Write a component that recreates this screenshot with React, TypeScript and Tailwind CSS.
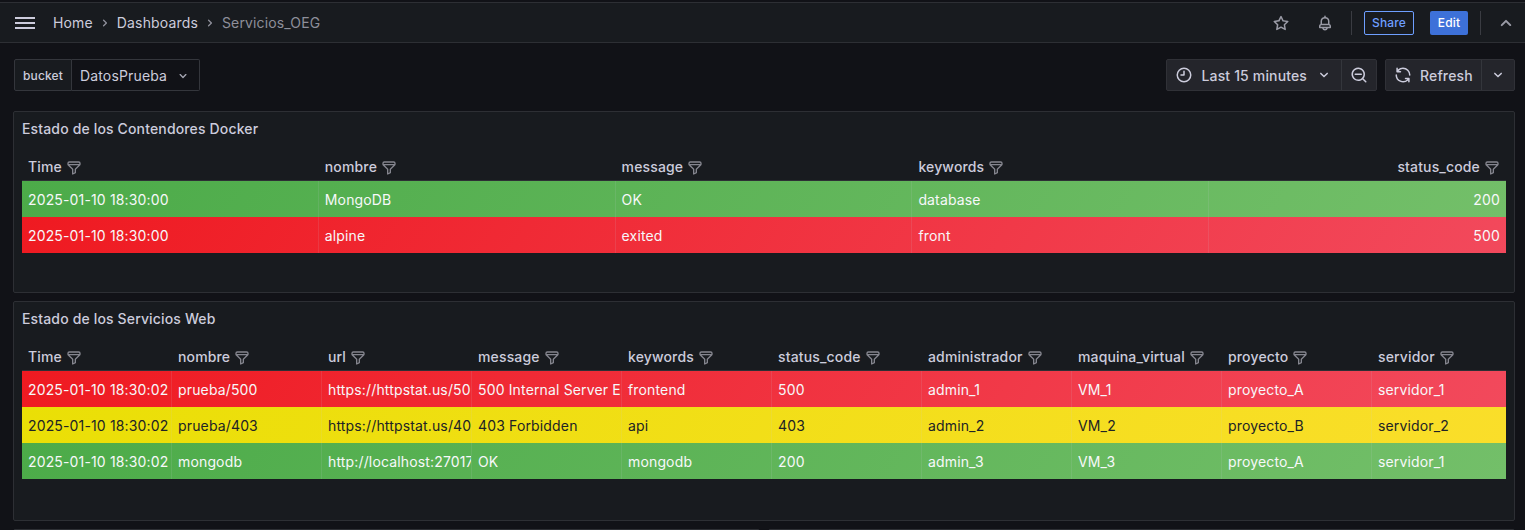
import type { ReactNode } from "react";

const ICONS = {
  filter:
    "M19,2H5A3,3,0,0,0,2,5V6.17a3,3,0,0,0,.25,1.2l0,.06a2.81,2.81,0,0,0,.59.86L9,14.41V21a1,1,0,0,0,.47.85A1,1,0,0,0,10,22a1,1,0,0,0,.45-.11l4-2A1,1,0,0,0,15,19V14.41l6.12-6.12a2.81,2.81,0,0,0,.59-.86l0-.06A3,3,0,0,0,22,6.17V5A3,3,0,0,0,19,2ZM13.29,13.29A1,1,0,0,0,13,14v4.38l-2,1V14a1,1,0,0,0-.29-.71L5.41,8H18.59ZM20,6H4V5A1,1,0,0,1,5,4H19a1,1,0,0,1,1,1Z",
  down: "M17,9.17a1,1,0,0,0-1.41,0L12,12.71,8.46,9.17a1,1,0,0,0-1.41,0,1,1,0,0,0,0,1.42l4.24,4.24a1,1,0,0,0,1.42,0L17,10.59A1,1,0,0,0,17,9.17Z",
  right:
    "M14.83,11.29,10.59,7.05a1,1,0,0,0-1.42,0,1,1,0,0,0,0,1.41L12.71,12,9.17,15.54a1,1,0,0,0,0,1.41,1,1,0,0,0,.71.29,1,1,0,0,0,.71-.29l4.24-4.24A1,1,0,0,0,14.83,11.29Z",
  up: "M17,13.41,12.71,9.17a1,1,0,0,0-1.42,0L7.05,13.41a1,1,0,0,0,0,1.42,1,1,0,0,0,1.41,0L12,11.29l3.54,3.54a1,1,0,0,0,.7.29,1,1,0,0,0,.71-.29A1,1,0,0,0,17,13.41Z",
  clock:
    "M12,6a1,1,0,0,0-1,1v4H8a1,1,0,0,0,0,2h4a1,1,0,0,0,1-1V7A1,1,0,0,0,12,6Zm0-4A10,10,0,1,0,22,12,10,10,0,0,0,12,2Zm0,18a8,8,0,1,1,8-8A8,8,0,0,1,12,20Z",
  zoomOut:
    "M21.71,20.29,18,16.61A9,9,0,1,0,16.61,18l3.68,3.68a1,1,0,0,0,1.42,0A1,1,0,0,0,21.71,20.29ZM11,18a7,7,0,1,1,7-7A7,7,0,0,1,11,18Zm4-8H7a1,1,0,0,0,0,2h8a1,1,0,0,0,0-2Z",
  sync: "M19.91,15.51H15.38a1,1,0,0,0,0,2h2.4A8,8,0,0,1,4,12a1,1,0,1,0-2,0,10,10,0,0,0,16.88,7.23V21a1,1,0,0,0,2,0V16.5A1,1,0,0,0,19.91,15.51ZM12,2A10,10,0,0,0,5.12,4.77V3a1,1,0,0,0-2,0V7.5a1,1,0,0,0,1,1h4.5a1,1,0,0,0,0-2H6.22A8,8,0,0,1,20,12a1,1,0,0,0,2,0A10,10,0,0,0,12,2Z",
  bell: "M18,13.18V10a6,6,0,0,0-5-5.91V3a1,1,0,0,0-2,0V4.09A6,6,0,0,0,6,10v3.18A3,3,0,0,0,4,16v2a1,1,0,0,0,1,1H8.14a4,4,0,0,0,7.72,0H19a1,1,0,0,0,1-1V16A3,3,0,0,0,18,13.18ZM8,10a4,4,0,0,1,8,0v3H8Zm4,10a2,2,0,0,1-1.72-1h3.44A2,2,0,0,1,12,20Zm6-3H6V16a1,1,0,0,1,1-1H17a1,1,0,0,1,1,1Z",
  star: "M22,9.67A1,1,0,0,0,21.14,9l-5.69-.83L12.9,3a1,1,0,0,0-1.8,0L8.55,8.16,2.86,9a1,1,0,0,0-.81.68,1,1,0,0,0,.25,1l4.13,4-1,5.68A1,1,0,0,0,6.9,21.44L12,18.77l5.1,2.67a.93.93,0,0,0,.46.12,1,1,0,0,0,.59-.19,1,1,0,0,0,.4-1l-1-5.68,4.13-4A1,1,0,0,0,22,9.67Zm-6.15,4a1,1,0,0,0-.29.88l.72,4.2-3.76-2a1.06,1.06,0,0,0-.94,0l-3.76,2,.72-4.2a1,1,0,0,0-.29-.88l-3-3,4.21-.61a1,1,0,0,0,.76-.55L12,5.7l1.88,3.82a1,1,0,0,0,.76.55l4.21.61Z",
};

function Icon({ name, className = "size-4" }: { name: keyof typeof ICONS; className?: string }) {
  return (
    <svg viewBox="0 0 24 24" fill="currentColor" className={`shrink-0 ${className}`}>
      <path d={ICONS[name]} />
    </svg>
  );
}

type Tone = "green" | "red" | "yellow";
type Row = { tone: Tone; cells: string[] };

const TONES: Record<Tone, string> = {
  green: "bg-[linear-gradient(120deg,#4cab49,#73bf69)] text-[#f7f8fa]",
  red: "bg-[linear-gradient(120deg,#ef1a21,#f2495c)] text-[#f7f8fa]",
  yellow: "bg-[linear-gradient(120deg,#eadf06,#fade2a)] text-[#202226]",
};

function Panel({ title, className, children }: { title: string; className: string; children: ReactNode }) {
  return (
    <section className={`flex shrink-0 flex-col rounded-[2px] border border-[#2d2f34] bg-[#181b1f] px-2 ${className}`}>
      <h2 className="flex h-[33px] shrink-0 items-center font-medium">{title}</h2>
      {children}
    </section>
  );
}

function Table({
  columns,
  rows,
  cell,
  lastRight = false,
}: {
  columns: string[];
  rows: Row[];
  cell: string;
  lastRight?: boolean;
}) {
  const align = (i: number) => (lastRight && i === columns.length - 1 ? "justify-end" : "");
  return (
    <div className="mt-2 overflow-hidden">
      <div className="flex h-7 border-b border-[#2d2f34]">
        {columns.map((name, i) => (
          <div key={name} className={`flex shrink-0 items-center gap-1 px-1.5 font-medium ${cell} ${align(i)}`}>
            {name}
            <Icon name="filter" className="mt-0.5 size-4 text-[#85868f]" />
          </div>
        ))}
      </div>
      {rows.map((row, r) => (
        <div key={r} className={`flex h-9 ${TONES[row.tone]}`}>
          {row.cells.map((text, i) => (
            <div
              key={i}
              className={`flex shrink-0 items-center overflow-hidden border-r border-[#ccccdc]/12 pt-0.5 pl-1.5 last:border-r-0 last:pr-1.5 ${cell} ${align(i)}`}
            >
              <span className="whitespace-nowrap">{text}</span>
            </div>
          ))}
        </div>
      ))}
    </div>
  );
}

const DOCKER_COLUMNS = ["Time", "nombre", "message", "keywords", "status_code"];
const DOCKER_ROWS: Row[] = [
  { tone: "green", cells: ["2025-01-10 18:30:00", "MongoDB", "OK", "database", "200"] },
  { tone: "red", cells: ["2025-01-10 18:30:00", "alpine", "exited", "front", "500"] },
];

const WEB_COLUMNS = [
  "Time",
  "nombre",
  "url",
  "message",
  "keywords",
  "status_code",
  "administrador",
  "maquina_virtual",
  "proyecto",
  "servidor",
];
const WEB_ROWS: Row[] = [
  {
    tone: "red",
    cells: ["2025-01-10 18:30:02", "prueba/500", "https://httpstat.us/50", "500 Internal Server E", "frontend", "500", "admin_1", "VM_1", "proyecto_A", "servidor_1"],
  },
  {
    tone: "yellow",
    cells: ["2025-01-10 18:30:02", "prueba/403", "https://httpstat.us/40", "403 Forbidden", "api", "403", "admin_2", "VM_2", "proyecto_B", "servidor_2"],
  },
  {
    tone: "green",
    cells: ["2025-01-10 18:30:02", "mongodb", "http://localhost:27017", "OK", "mongodb", "200", "admin_3", "VM_3", "proyecto_A", "servidor_1"],
  },
];

function Header() {
  return (
    <header className="flex h-[41px] shrink-0 items-center border-y border-[#2d2f34] bg-[#181b1f] pr-[7px] pl-[15px]">
      <button className="mr-[18px] flex w-5 flex-col gap-[3px]">
        <span className="h-0.5 bg-[#ccccdc]" />
        <span className="h-0.5 bg-[#ccccdc]" />
        <span className="h-0.5 bg-[#ccccdc]" />
      </button>
      <nav className="flex items-center gap-1">
        <span>Home</span>
        <Icon name="right" className="mt-px size-4 text-[#8e8f9a]" />
        <span>Dashboards</span>
        <Icon name="right" className="mt-px size-4 text-[#8e8f9a]" />
        <span className="text-[#8e8f9a]">Servicios_OEG</span>
      </nav>
      <div className="ml-auto flex items-center text-[#9a9ba6]">
        <Icon name="star" className="mr-[26px] size-[18px]" />
        <Icon name="bell" className="mr-[17px] size-[18px]" />
        <span className="mr-3 h-6 w-px bg-[#3a3c42]" />
        <button className="mr-4 h-6 w-[50px] rounded-[2px] border border-[#6e9fff] text-xs font-medium text-[#6e9fff]">
          Share
        </button>
        <button className="mr-3 h-6 w-[38px] rounded-[2px] bg-[#3d71d9] text-xs font-medium text-white">Edit</button>
        <span className="mr-[13px] h-6 w-px bg-[#3a3c42]" />
        <Icon name="up" className="size-6" />
      </div>
    </header>
  );
}

function Toolbar() {
  return (
    <div className="flex h-8 shrink-0 pr-[10px] pl-[14px]">
      <div className="flex w-[58px] items-center justify-center rounded-l-[2px] border border-[#34363c] bg-[#181b1f] pt-0.5 text-xs font-medium">
        bucket
      </div>
      <button className="flex w-32 items-center rounded-r-[2px] border border-l-0 border-[#34363c] pt-0.5 pl-2">
        DatosPrueba
        <Icon name="down" className="ml-2 size-4 text-[#a5a6b2]" />
      </button>
      <div className="ml-auto flex rounded-[2px] border border-[#303137] bg-[#24252b] font-medium">
        <button className="flex w-[175px] items-center border-r border-[#34363c] pl-2">
          <Icon name="clock" className="mr-[8.5px] size-[18px]" />
          <span className="pt-0.5">Last 15 minutes</span>
          <Icon name="down" className="ml-2 size-[18px]" />
        </button>
        <button className="flex w-[34px] items-center justify-center">
          <Icon name="zoomOut" className="size-[18px]" />
        </button>
      </div>
      <div className="ml-2 flex rounded-[2px] border border-[#303137] bg-[#24252b] font-medium">
        <button className="flex w-[96px] items-center border-r border-[#34363c] pl-2">
          <Icon name="sync" className="mr-2 size-[18px]" />
          <span className="pt-0.5">Refresh</span>
        </button>
        <button className="flex w-8 items-center justify-center">
          <Icon name="down" className="size-[18px]" />
        </button>
      </div>
    </div>
  );
}

export default function App() {
  return (
    <div className="flex h-[530px] w-[1525px] flex-col overflow-hidden bg-[#111217] pt-0.5 font-['Inter',sans-serif] text-sm tracking-[0.15px] text-[#ccccdc]">
      <Header />
      <div className="mt-4">
        <Toolbar />
      </div>
      <main className="mt-5 flex flex-col gap-2 pr-[10px] pl-[13px]">
        <Panel title="Estado de los Contendores Docker" className="h-[182px]">
          <Table columns={DOCKER_COLUMNS} rows={DOCKER_ROWS} cell="w-1/5" lastRight />
        </Panel>
        <Panel title="Estado de los Servicios Web" className="h-[220px]">
          <Table columns={WEB_COLUMNS} rows={WEB_ROWS} cell="w-[150px]" />
        </Panel>
        <div className="grid grid-cols-2 gap-2">
          <div className="h-8 rounded-[2px] border border-[#2d2f34] bg-[#181b1f]" />
          <div className="h-8 rounded-[2px] border border-[#2d2f34] bg-[#181b1f]" />
        </div>
      </main>
    </div>
  );
}
